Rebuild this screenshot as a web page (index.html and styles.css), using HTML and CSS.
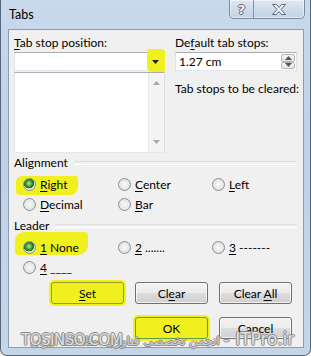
FILE: index.html
```html
<!DOCTYPE html>
<html lang="en">

<head>
    <meta charset="UTF-8">
    <meta name="viewport" content="width=device-width, initial-scale=1.0">
    <title>Tabs</title>
    <link rel="stylesheet" href="styles.css">
</head>

<body>
    <div class="window">
        <div class="titlebar">
            <span class="title">Tabs</span>
            <div class="caption">
                <span class="cap help">?</span>
                <span class="cap close">
                    <svg width="16" height="13" viewBox="0 0 16 13">
                        <path d="M1.5 1.5h4l2.5 3 2.5-3h4l-4.5 5 4.5 5h-4l-2.5-3-2.5 3h-4l4.5-5z" fill="#eef2f6" stroke="#5d6b7b" stroke-width="1" stroke-linejoin="round"/>
                    </svg>
                </span>
            </div>
        </div>

        <div class="panel">
            <div class="top">
                <div class="col">
                    <div class="lbl"><u>T</u>ab stop position:</div>
                    <div class="combo">
                        <span class="drop">
                            <svg width="7" height="4" viewBox="0 0 7 4"><path d="M0 0h7L3.5 4z" fill="#222"/></svg>
                        </span>
                    </div>
                    <div class="listbox">
                        <div class="scroll">
                            <svg width="7" height="4" viewBox="0 0 7 4"><path d="M0 4h7L3.5 0z" fill="#a8a8a8"/></svg>
                            <svg width="7" height="4" viewBox="0 0 7 4"><path d="M0 0h7L3.5 4z" fill="#a8a8a8"/></svg>
                        </div>
                    </div>
                </div>
                <div class="col">
                    <div class="lbl">De<u>f</u>ault tab stops:</div>
                    <div class="spin">
                        <span class="val">1.27 cm</span>
                        <div class="spin_btns">
                            <span><svg width="7" height="4" viewBox="0 0 7 4"><path d="M0 4h7L3.5 0z" fill="#555"/></svg></span>
                            <span><svg width="7" height="4" viewBox="0 0 7 4"><path d="M0 0h7L3.5 4z" fill="#555"/></svg></span>
                        </div>
                    </div>
                    <div class="lbl cleared">Tab stops to be cleared:</div>
                </div>
            </div>

            <div class="group_head">Alignment</div>
            <div class="radios">
                <div class="radio mark_right"><span class="dot on"></span><span><u>R</u>ight</span></div>
                <div class="radio"><span class="dot"></span><span><u>C</u>enter</span></div>
                <div class="radio"><span class="dot"></span><span><u>L</u>eft</span></div>
                <div class="radio"><span class="dot"></span><span><u>D</u>ecimal</span></div>
                <div class="radio"><span class="dot"></span><span><u>B</u>ar</span></div>
            </div>

            <div class="group_head leader">Leader</div>
            <div class="radios">
                <div class="radio mark_none"><span class="dot on"></span><span><u>1</u> None</span></div>
                <div class="radio"><span class="dot"></span><span><u>2</u> .......</span></div>
                <div class="radio"><span class="dot"></span><span><u>3</u> -------</span></div>
                <div class="radio"><span class="dot"></span><span><u>4</u> ____</span></div>
            </div>

            <div class="btn_row">
                <button class="btn yellow"><u>S</u>et</button>
                <button class="btn">Cl<u>e</u>ar</button>
                <button class="btn">Clear <u>A</u>ll</button>
            </div>
            <div class="btn_row">
                <button class="btn yellow default">OK</button>
                <button class="btn">Cancel</button>
            </div>
        </div>

        <div class="watermark">
            <span class="wm_site">TOSINSO.COM</span>
            <span class="wm_fa" dir="rtl">انجمن تخصصی فناوری اطلاعات ایران</span>
            <span class="wm_it">- ITPro.ir</span>
        </div>
    </div>
</body>

</html>
```

FILE: styles.css
```css
* {
    box-sizing: border-box;
}

body {
    margin: 0;
    background: #fff;
    font-family: Lato, "Noto Sans", sans-serif;
    font-size: 12px;
    color: #000;
}

u {
    text-decoration-thickness: 1px;
    text-underline-offset: 2px;
}

.window {
    position: relative;
    width: 311px;
    height: 356px;
    padding: 0 6px 6px 7px;
    background: linear-gradient(180deg, #c9d9ec 0%, #bfd1e7 40%, #c6d6e9 100%);
    border: 1px solid #56677c;
    border-top: none;
    border-radius: 0 0 7px 7px;
}

.titlebar {
    display: flex;
    align-items: flex-start;
    height: 29px;
}

.title {
    margin: 7px 0 0 1px;
    font-size: 12.5px;
    line-height: 15px;
}

.caption {
    display: flex;
    margin-left: auto;
    margin-right: -1px;
    height: 19px;
    border: 1px solid #7d8da0;
    border-top: none;
    border-radius: 0 0 5px 5px;
    background: linear-gradient(180deg, #dfe8f3 0%, #cfdcec 50%, #c2d2e6 100%);
    box-shadow: inset 0 0 0 1px rgba(255, 255, 255, 0.5);
}

.cap {
    display: flex;
    align-items: center;
    justify-content: center;
}

.help {
    width: 24px;
    border-right: 1px solid #8394a8;
    font-family: "DejaVu Sans", sans-serif;
    font-weight: bold;
    font-size: 13px;
    color: #eef2f6;
    text-shadow: 1px 0 #5d6b7b, -1px 0 #5d6b7b, 0 1px #5d6b7b, 0 -1px #5d6b7b;
}

.close {
    width: 50px;
}

.panel {
    height: 319px;
    padding: 5px 5px 0 5px;
    background: #f0f0f0;
    border: 1px solid #8c9db2;
}

.top {
    display: grid;
    grid-template-columns: 151px 122px;
    column-gap: 10px;
}

.lbl {
    line-height: 15px;
    margin-bottom: 2px;
    white-space: nowrap;
}

.lbl.cleared {
    margin-top: 10px;
}

.combo {
    display: flex;
    justify-content: flex-end;
    height: 19px;
    background: #fff;
    border: 1px solid #abadb3;
    border-color: #abadb3 #dbdfe6 #e3e9ef #e2e3ea;
}

.drop {
    position: relative;
    display: flex;
    width: 17px;
    align-items: center;
    justify-content: center;
    isolation: isolate;
}

.drop::before {
    content: "";
    position: absolute;
    top: -4px;
    left: 0;
    right: -1px;
    bottom: -2px;
    z-index: -1;
    background: #f0f01e;
    border-radius: 3px 4px 2px 5px;
}

.listbox {
    display: flex;
    justify-content: flex-end;
    height: 81px;
    margin-top: 1px;
    background: #fff;
    border: 1px solid #828790;
    border-color: #abadb3 #dbdfe6 #e3e9ef #e2e3ea;
}

.scroll {
    display: flex;
    flex-direction: column;
    justify-content: space-between;
    align-items: center;
    width: 16px;
    padding: 8px 0 8px;
    background: #f4f4f4;
    border-left: 1px solid #e8e8e8;
}

.spin {
    display: flex;
    height: 19px;
    background: #fff;
    border: 1px solid #abadb3;
    border-color: #abadb3 #dbdfe6 #e3e9ef #e2e3ea;
}

.val {
    flex: 1;
    padding-left: 3px;
    line-height: 17px;
}

.spin_btns {
    display: flex;
    flex-direction: column;
    width: 16px;
    padding: 1px;
}

.spin_btns span {
    flex: 1;
    display: flex;
    align-items: center;
    justify-content: center;
    background: linear-gradient(180deg, #f6f6f6, #e4e4e4);
    border: 1px solid #b4b4b4;
    border-radius: 2px;
}

.group_head {
    display: flex;
    align-items: center;
    margin-top: 2px;
    line-height: 15px;
}

.group_head::after {
    content: "";
    flex: 1;
    margin: 1px 1px 0 6px;
    height: 2px;
    border-top: 1px solid #dcdcdc;
    border-bottom: 1px solid #fff;
}

.group_head.leader {
    margin-top: 4px;
}

.radios {
    display: grid;
    grid-template-columns: 95px 94px auto;
    grid-auto-rows: 20px;
    margin-top: 4px;
    padding-left: 9px;
}

.radio {
    position: relative;
    display: flex;
    align-items: center;
    gap: 4px;
    white-space: pre;
    isolation: isolate;
}

.dot {
    width: 13px;
    height: 13px;
    border-radius: 50%;
    border: 1px solid #8e8f8f;
    background: radial-gradient(circle at 50% 50%, #fafafa 0%, #e6e6e6 60%, #d0d0d0 100%);
}

.dot.on {
    background: radial-gradient(circle at 45% 40%, #b8ec96 0%, #3a9a2c 35%, #1f6a1c 55%, #e6e6e6 58%, #d8d8d8 100%);
}

.mark_right::before,
.mark_none::before {
    content: "";
    position: absolute;
    z-index: -1;
    background: #f0f01e;
}

.mark_right::before {
    left: -7px;
    top: 2px;
    width: 62px;
    height: 19px;
    border-radius: 6px 3px 8px 4px;
}

.mark_none::before {
    left: -8px;
    top: -5px;
    width: 73px;
    height: 23px;
    border-radius: 9px 4px 10px 3px;
}

.btn_row {
    display: flex;
    justify-content: flex-end;
    gap: 11px;
    padding-right: 6px;
    margin-top: 5px;
}

.btn_row + .btn_row {
    margin-top: 13px;
}

.btn {
    width: 73px;
    height: 22px;
    padding: 0;
    font-family: Lato, "Noto Sans", sans-serif;
    font-size: 12px;
    color: #000;
    border: 1px solid #707070;
    border-radius: 3px;
    background: linear-gradient(180deg, #f2f2f2 0%, #ebebeb 50%, #dddddd 51%, #cfcfcf 100%);
    box-shadow: inset 0 0 0 1px rgba(255, 255, 255, 0.7);
}

.btn.yellow {
    background: #f0f01e;
    border-color: #9a9a30;
    box-shadow: 0 0 0 2px #f0f01e;
}

.btn.default {
    border-color: #5f9a46;
}

.watermark {
    position: absolute;
    left: 6px;
    bottom: 6px;
    display: flex;
    align-items: baseline;
    white-space: nowrap;
    pointer-events: none;
    color: rgba(255, 255, 255, 0.75);
    text-shadow: 1px 0 #8a8a8a, -1px 0 #8a8a8a, 0 1px #8a8a8a, 0 -1px #8a8a8a;
}

.wm_site {
    font-family: "DejaVu Sans", sans-serif;
    font-size: 15px;
    letter-spacing: -0.5px;
    margin-right: -92px;
    margin-left: 14px;
    z-index: 1;
}

.wm_fa {
    font-family: "DejaVu Sans", sans-serif;
    font-size: 12px;
    color: rgba(255, 255, 255, 0.6);
}

.wm_it {
    margin-left: 4px;
    font-family: "DejaVu Sans", sans-serif;
    font-size: 17px;
}
```
